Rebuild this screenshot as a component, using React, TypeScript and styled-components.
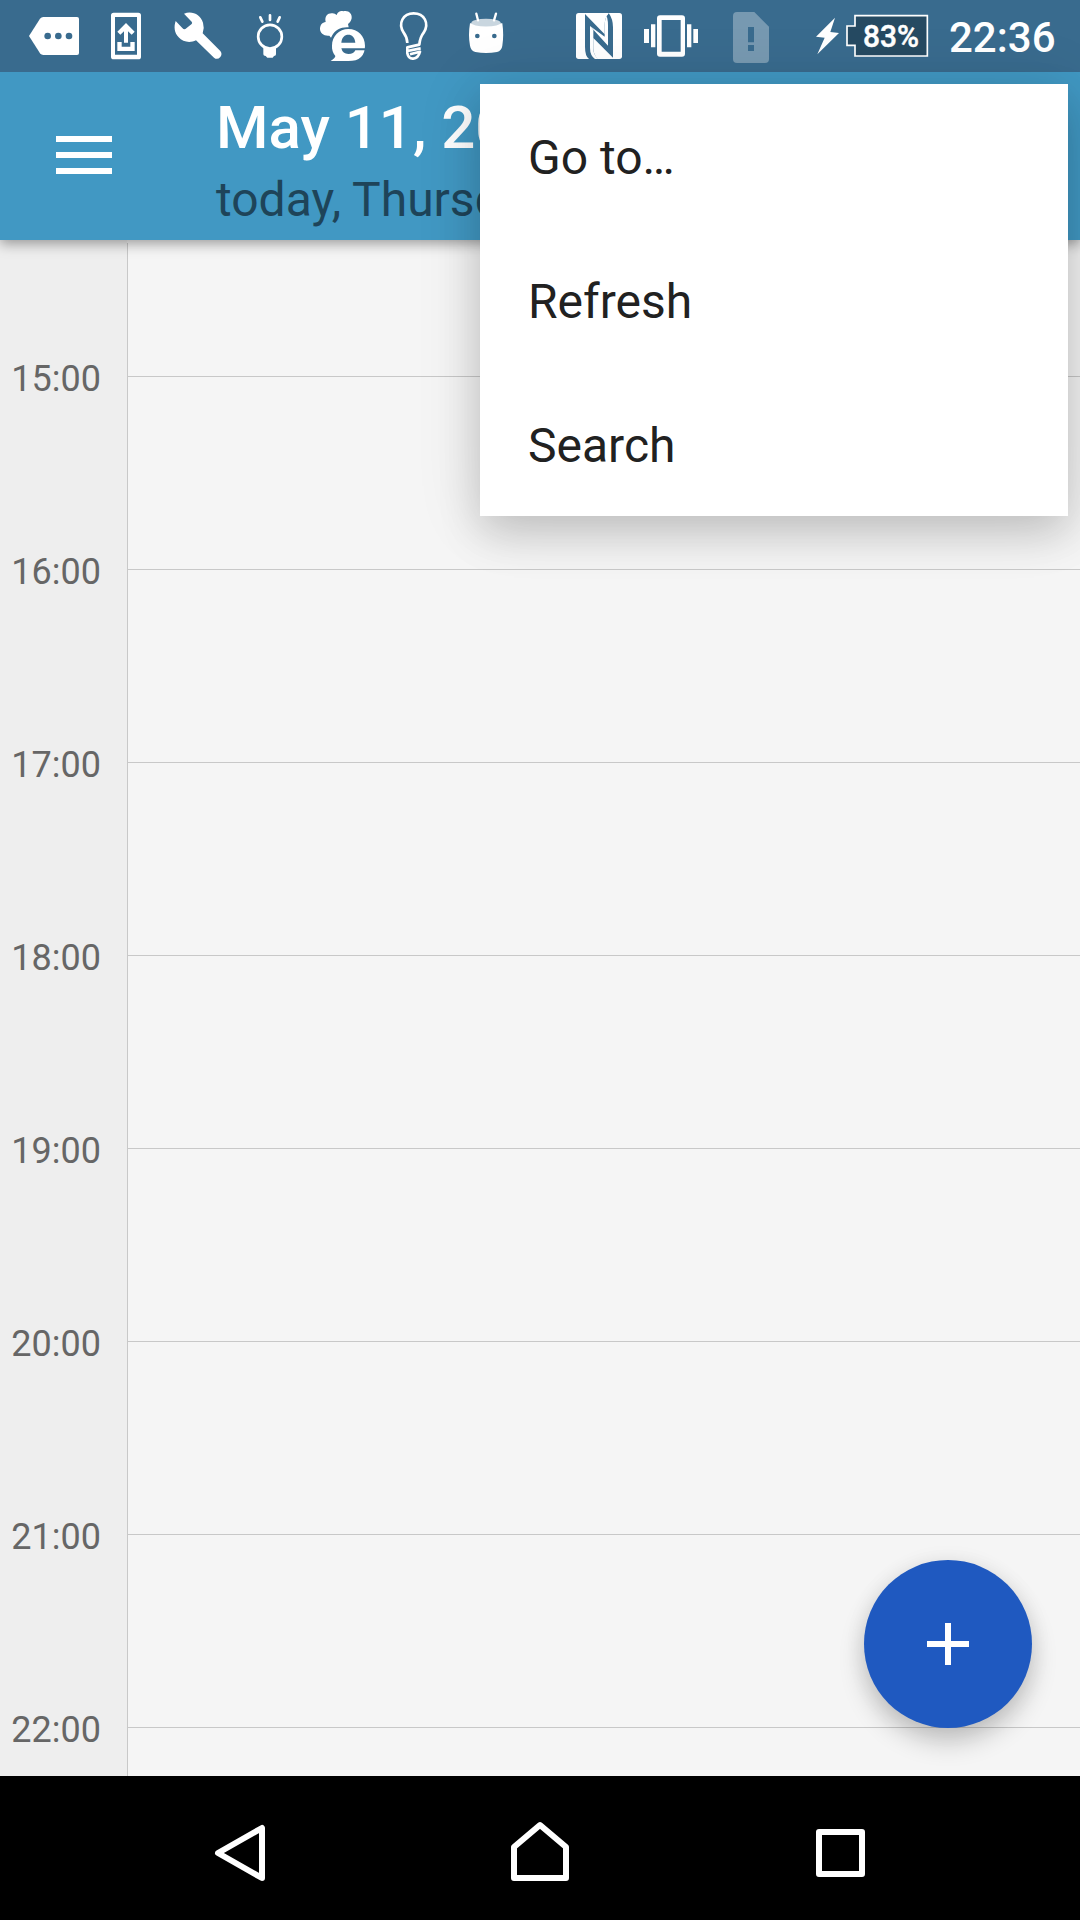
import React from "react";
import styled, { createGlobalStyle } from "styled-components";

const BAR = "#396b8e";

const GlobalStyle = createGlobalStyle`
  * { box-sizing: border-box; }
  body { margin: 0; background: #f5f5f5; font-family: Roboto, "Liberation Sans", sans-serif; }
`;

const Screen = styled.div`
  position: relative;
  display: flex;
  flex-direction: column;
  width: 1080px;
  height: 1920px;
  overflow: hidden;
`;

const StatusBar = styled.header`
  z-index: 3;
  display: flex;
  flex: 0 0 72px;
  justify-content: space-between;
  padding-left: 18px;
  background: ${BAR};
  color: #fff;
`;

const IconGroup = styled.div`
  display: flex;
  height: 72px;
`;

const SystemGroup = styled(IconGroup)`
  width: 517px;
`;

const StatusIcon = styled.svg<{ $width?: number }>`
  display: block;
  flex: none;
  width: ${(p) => p.$width ?? 72}px;
  height: 72px;
`;

const Clock = styled.time`
  padding-left: 18px;
  font-size: 42px;
  font-weight: 500;
  line-height: 75px;
`;

const BatteryText = styled.text`
  font: 500 95px Roboto, "Liberation Sans", sans-serif;
`;

const Toolbar = styled.div`
  z-index: 2;
  display: flex;
  flex: 0 0 168px;
  background: #4198c3;
  box-shadow: 0 4px 12px rgba(0, 0, 0, 0.36);
`;

const MenuButton = styled.button`
  display: flex;
  flex-direction: column;
  gap: 10px;
  width: 216px;
  padding: 64px 0 0 56px;
  border: 0;
  background: none;
`;

const MenuStroke = styled.span`
  width: 56px;
  height: 6px;
  background: #fff;
`;

const Heading = styled.div`
  padding-top: 20px;
  white-space: nowrap;
`;

const Title = styled.h1`
  margin: 0;
  color: #fff;
  font-size: 60px;
  font-weight: 500;
  line-height: 71px;
`;

const Subtitle = styled.p`
  margin: 0;
  color: #1e4459;
  font-size: 48px;
  line-height: 74px;
`;

const Timeline = styled.main`
  display: flex;
  flex: 1;
  flex-direction: column;
  min-height: 0;
  padding-top: 3px;
  overflow: hidden;
  background: linear-gradient(to right, #eee 127px, #f5f5f5 127px);
`;

const HourRow = styled.div<{ $height?: number }>`
  display: grid;
  flex: 0 0 ${(p) => p.$height ?? 193}px;
  grid-template-columns: 128px 1fr;
`;

const HourGutter = styled.div`
  border-right: 1px solid #c8c8c8;
`;

const HourLabel = styled.div`
  margin: -19px 26px 0 0;
  color: #666;
  font-size: 36px;
  line-height: 42px;
  text-align: right;
`;

const HourCell = styled.div`
  border-bottom: 1px solid #c8c8c8;
`;

const Menu = styled.ul`
  position: absolute;
  z-index: 4;
  top: 84px;
  right: 12px;
  width: 588px;
  margin: 0;
  padding: 0;
  list-style: none;
  background: #fff;
  box-shadow: 0 18px 40px rgba(0, 0, 0, 0.16), 0 4px 64px rgba(0, 0, 0, 0.11);
`;

const MenuItem = styled.li`
  height: 144px;
  padding-left: 48px;
  color: #212121;
  font-size: 48px;
  line-height: 148px;
`;

const AddButton = styled.button`
  position: absolute;
  z-index: 1;
  right: 48px;
  bottom: 192px;
  display: grid;
  place-items: center;
  width: 168px;
  height: 168px;
  padding: 0;
  border: 0;
  border-radius: 50%;
  background: #1f59c0;
  box-shadow: 0 14px 26px rgba(0, 0, 0, 0.2), 0 2px 22px rgba(0, 0, 0, 0.07);
`;

const NavBar = styled.nav`
  z-index: 2;
  display: flex;
  flex: 0 0 144px;
  padding: 0 90px;
  background: #000;
`;

const NavIcon = styled.svg`
  display: block;
  width: 300px;
  height: 144px;
  fill: none;
  stroke: #fff;
  stroke-width: 6;
  stroke-linejoin: round;
`;

function Notifications() {
  return (
    <IconGroup>
      <StatusIcon viewBox="54 0 216 216" fill="#fff">
        <path d="M87 108 120 56Q124 51 130 51H231Q237 51 237 57V159Q237 165 231 165H130Q124 165 120 160Z" />
        <g fill={BAR}>
          <circle cx="143" cy="108" r="10" />
          <circle cx="175" cy="108" r="10" />
          <circle cx="207" cy="108" r="10" />
        </g>
      </StatusIcon>
      <StatusIcon viewBox="270 0 216 216" fill="#fff">
        <path
          fillRule="evenodd"
          d="M341 38H415Q423 38 423 46V170Q423 178 415 178H341Q333 178 333 170V46Q333 38 341 38ZM345 51V164H411V51Z"
        />
        <path d="M378 69 404 95 395 104 384 94V128H372V94L361 104 352 95ZM352 126H365V140H391V126H404V153H352Z" />
      </StatusIcon>
      <StatusIcon viewBox="486 0 216 216" fill="#fff">
        <path d="M552 41C577 31 602 45 609 68Q614 84 608 100L661 153Q668 162 661 171Q652 181 642 173L588 121C570 130 548 126 536 112C523 99 521 80 527 63L547 84Q553 91 559 85L575 72Q578 69 575 65Z" />
      </StatusIcon>
      <StatusIcon viewBox="-18 0 216 216" fill="none" stroke="#fff" strokeWidth="8" strokeLinecap="round">
        <circle cx="90" cy="110" r="35.5" />
        <path d="M90 46V60M61 52 67 65M119 52 113 65" />
        <path
          d="M70 140Q90 152 108 140V163Q108 168 102 168L98 173H82L77 168Q70 168 70 163Z"
          fill="#fff"
          stroke="none"
        />
      </StatusIcon>
      <StatusIcon viewBox="198 0 216 216" fill="#fff">
        <path d="M273 113 268 107C252 109 240 99 240 87C240 75 247 67 257 66C253 48 264 38 278 40Q285 41 290 45C294 34 302 32 310 34C326 30 337 42 335 55C333 64 329 68 324 72L326 82C304 80 284 91 276 107Z" />
        <path d="M325 87C354 87 375 108 375 137Q375 183 325 183H272Q286 174 286 168C279 160 275 148 276 137C276 108 298 87 325 87Z" />
        <path fill={BAR} d="M304 128C306 111 314 104 325 104S344 111 346 128ZM304 145H376V151H346Q342 162 325 162T304 145Z" />
      </StatusIcon>
      <StatusIcon viewBox="414 0 216 216" fill="none" stroke="#fff" strokeWidth="8" strokeLinejoin="round">
        <path d="M502 129Q501 111 491 98C473 70 489 40 521 40S569 70 551 98Q540 112 538 134L502 142V160C506 182 533 182 540 155L510 163M502 153 542 145" />
      </StatusIcon>
      <StatusIcon viewBox="630 0 216 216" fill="#fff">
        <path d="M690 70Q684 105 690 137Q693 153 706 156Q738 162 771 156Q785 152 787 137Q792 105 787 70Z" />
        <ellipse cx="738" cy="68" rx="44" ry="11.5" fill="#c9d6df" />
        <path d="M709 41 714 61M768 41 762 61" stroke="#fff" strokeWidth="7" strokeLinecap="round" />
        <circle cx="712" cy="108" r="7" fill={BAR} />
        <circle cx="763" cy="108" r="7" fill={BAR} />
      </StatusIcon>
    </IconGroup>
  );
}

function SystemIcons() {
  return (
    <SystemGroup>
      <StatusIcon viewBox="9 0 216 216">
        <rect x="48" y="39" width="138" height="138" rx="8" fill="#fff" />
        <path
          fill={BAR}
          d="M75 42 134 103V76Q134 54 146 39Q159 57 159 82V173L100 114V145Q101 166 113 177H87Q75 168 75 140Z"
        />
        <path fill="#fff" d="M90 78 144 137V76Q144 53 136 39H146Q134 54 134 76V110L90 78ZM90 78V144Q90 167 105 177H115Q100 166 100 145V90Z" />
      </StatusIcon>
      <StatusIcon viewBox="225 0 216 216" fill="#fff">
        <path
          fillRule="evenodd"
          d="M300 46H366Q375 46 375 55V161Q375 170 366 170H300Q291 170 291 161V55Q291 46 300 46ZM305 60V155H362V60Z"
        />
        <path d="M273 73H286V142H273ZM252 87H267V129H252ZM381 73H394V142H381ZM400 87H414V129H400Z" />
      </StatusIcon>
      <StatusIcon $width={80} viewBox="441 0 240 216">
        <path
          fill="#7799b1"
          d="M531 36H583L627 80V177Q627 189 615 189H531Q519 189 519 177V48Q519 36 531 36Z"
        />
        <path fill={BAR} d="M564 81H582V127H564ZM564 135H582V153H564Z" />
      </StatusIcon>
      <StatusIcon $width={144} viewBox="-9 0 432 216" fill="#fff">
        <path d="M135 53 78 110 104 113 82 163 147 99 121 96Z" />
        <path d="M195 47H412V168H195V136H171V78H195Z" fill="#264a62" stroke="#fff" strokeWidth="5" />
        <BatteryText
          x="219"
          y="140"
          textLength="168"
          lengthAdjust="spacingAndGlyphs"
          stroke="#fff"
          strokeWidth="1.5"
        >
          83%
        </BatteryText>
      </StatusIcon>
      <Clock>22:36</Clock>
    </SystemGroup>
  );
}

const hours = ["15:00", "16:00", "17:00", "18:00", "19:00", "20:00", "21:00", "22:00"];
const actions = ["Go to…", "Refresh", "Search"];

export default function App() {
  return (
    <>
      <GlobalStyle />
      <Screen>
        <StatusBar>
          <Notifications />
          <SystemIcons />
        </StatusBar>
        <Toolbar>
          <MenuButton aria-label="Menu">
            <MenuStroke />
            <MenuStroke />
            <MenuStroke />
          </MenuButton>
          <Heading>
            <Title>May 11, 2017</Title>
            <Subtitle>today, Thursday</Subtitle>
          </Heading>
        </Toolbar>
        <Timeline>
          <HourRow $height={134}>
            <HourGutter />
            <HourCell />
          </HourRow>
          {hours.map((hour) => (
            <HourRow key={hour}>
              <HourGutter>
                <HourLabel>{hour}</HourLabel>
              </HourGutter>
              <HourCell />
            </HourRow>
          ))}
        </Timeline>
        <NavBar>
          <NavIcon viewBox="90 1776 300 144">
            <path d="M218 1853 262 1828V1878Z" />
          </NavIcon>
          <NavIcon viewBox="390 1776 300 144">
            <path d="M514 1847 540 1825 566 1847V1878H514Z" />
          </NavIcon>
          <NavIcon viewBox="690 1776 300 144">
            <path d="M819 1832H862V1874H819Z" />
          </NavIcon>
        </NavBar>
        <AddButton aria-label="Add">
          <svg width="42" height="42" fill="#fff">
            <path d="M18 0H24V18H42V24H24V42H18V24H0V18H18Z" />
          </svg>
        </AddButton>
        <Menu>
          {actions.map((action) => (
            <MenuItem key={action}>{action}</MenuItem>
          ))}
        </Menu>
      </Screen>
    </>
  );
}
